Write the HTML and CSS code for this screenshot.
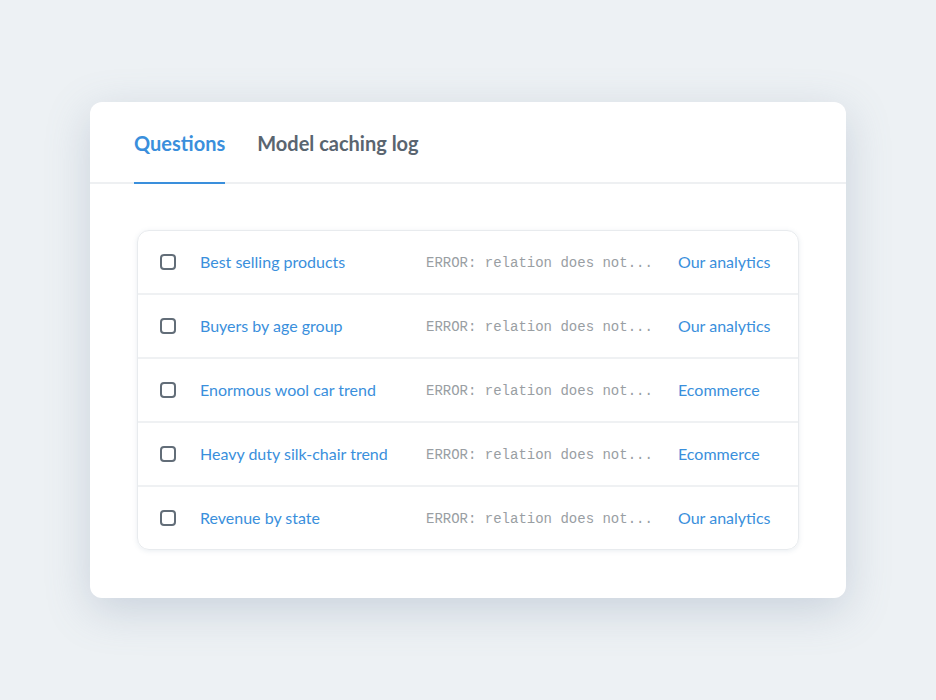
FILE: index.html
```html
<!DOCTYPE html>
<html>
<head>
<meta charset="utf-8">
<link rel="stylesheet" href="styles.css">
</head>
<body>
<div class="page">
  <div class="card">
    <div class="tabs">
      <div class="tab active">Questions</div>
      <div class="tab">Model caching log</div>
    </div>
    <div class="body">
      <div class="table">
        <div class="row">
          <span class="check"></span>
          <span class="name">Best selling products</span>
          <span class="err">ERROR: relation does not...</span>
          <span class="coll">Our analytics</span>
        </div>
        <div class="row">
          <span class="check"></span>
          <span class="name">Buyers by age group</span>
          <span class="err">ERROR: relation does not...</span>
          <span class="coll">Our analytics</span>
        </div>
        <div class="row">
          <span class="check"></span>
          <span class="name">Enormous wool car trend</span>
          <span class="err">ERROR: relation does not...</span>
          <span class="coll">Ecommerce</span>
        </div>
        <div class="row">
          <span class="check"></span>
          <span class="name">Heavy duty silk-chair trend</span>
          <span class="err">ERROR: relation does not...</span>
          <span class="coll">Ecommerce</span>
        </div>
        <div class="row">
          <span class="check"></span>
          <span class="name">Revenue by state</span>
          <span class="err">ERROR: relation does not...</span>
          <span class="coll">Our analytics</span>
        </div>
      </div>
    </div>
  </div>
</div>
</body>
</html>
```
FILE: styles.css
```css
* { box-sizing: border-box; }
html, body { margin: 0; padding: 0; }
body {
  background: #edf1f4;
  font-family: Lato, "Noto Sans", sans-serif;
  width: 936px;
  height: 700px;
  overflow: hidden;
}
.page {
  padding-top: 102px;
  padding-left: 90px;
}
.card {
  width: 756px;
  height: 496px;
  background: #fff;
  border-radius: 12px;
  box-shadow: 0 12px 44px rgba(120, 140, 165, 0.3);
}
.tabs {
  display: flex;
  gap: 32px;
  padding: 0 44px;
  border-bottom: 2px solid #eef0f2;
}
.tab {
  position: relative;
  height: 80px;
  display: flex;
  align-items: center;
  padding-top: 2px;
  font-size: 20px;
  font-weight: 700;
  color: #5a6570;
}
.tab.active { color: #3a8fdc; }
.tab.active::after {
  content: "";
  position: absolute;
  left: 0;
  right: 0;
  bottom: -2px;
  height: 2px;
  background: #3a8fdc;
}
.body {
  padding: 46px 47px 0 47px;
}
.table {
  border: 1px solid #e8ebee;
  border-radius: 12px;
  box-shadow: 0 1px 5px rgba(120, 140, 165, 0.16);
}
.row {
  display: grid;
  grid-template-columns: 16px 250px 252px auto;
  align-items: center;
  height: 64px;
  padding-left: 22px;
  border-bottom: 2px solid #eff1f3;
}
.row:last-child { border-bottom: none; height: 62px; }
.check {
  width: 16px;
  height: 16px;
  margin-top: -1px;
  border: 2px solid #626d78;
  border-radius: 4px;
}
.name {
  margin-left: 24px;
  font-size: 16px;
  color: #3a8fdc;
  white-space: nowrap;
  margin-top: -1px;
}
.err {
  font-family: "Liberation Mono", "DejaVu Sans Mono", monospace;
  font-size: 14px;
  color: #999ea3;
  white-space: nowrap;
  padding-top: 1px;
}
.coll {
  font-size: 16px;
  color: #3a8fdc;
  white-space: nowrap;
  margin-top: -1px;
}
```
